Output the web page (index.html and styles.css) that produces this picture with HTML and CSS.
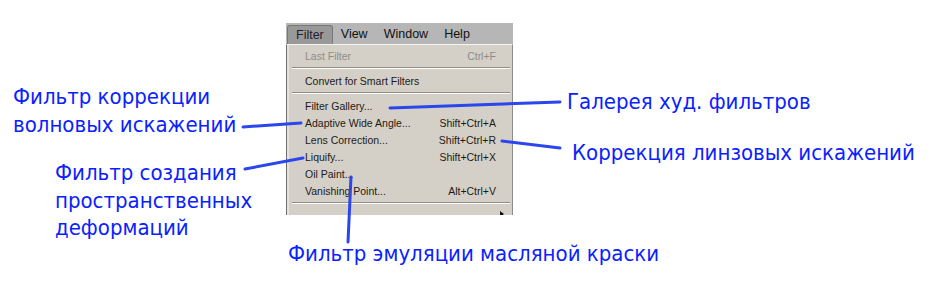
FILE: index.html
```html
<!DOCTYPE html>
<html lang="ru">

<head>
  <meta charset="UTF-8">
  <meta name="viewport" content="width=device-width, initial-scale=1.0">
  <title>Filter menu</title>
  <link rel="stylesheet" href="styles.css">
</head>

<body>
  <div class="canvas">
    <div class="menu">
      <div class="menubar">
        <span class="bar-item active">Filter</span>
        <span class="bar-item">View</span>
        <span class="bar-item">Window</span>
        <span class="bar-item">Help</span>
      </div>

      <div class="dropdown">
        <div class="item disabled"><span>Last Filter</span><span class="key">Ctrl+F</span></div>
        <div class="sep"></div>
        <div class="item"><span>Convert for Smart Filters</span></div>
        <div class="sep sep-wide"></div>
        <div class="item"><span>Filter Gallery...</span></div>
        <div class="item"><span>Adaptive Wide Angle...</span><span class="key">Shift+Ctrl+A</span></div>
        <div class="item"><span>Lens Correction...</span><span class="key">Shift+Ctrl+R</span></div>
        <div class="item"><span>Liquify...</span><span class="key">Shift+Ctrl+X</span></div>
        <div class="item"><span>Oil Paint...</span></div>
        <div class="item"><span>Vanishing Point...</span><span class="key">Alt+Ctrl+V</span></div>
        <div class="sep sep-wide"></div>
        <div class="item submenu"><span class="arrow"></span></div>
      </div>
    </div>

    <!-- callout labels -->
    <div class="note note-wave">Фильтр коррекции<br>волновых искажений</div>
    <div class="note note-liquify">Фильтр создания<br>пространственных<br>деформаций</div>
    <div class="note note-gallery">Галерея худ. фильтров</div>
    <div class="note note-lens">Коррекция линзовых искажений</div>
    <div class="note note-oil">Фильтр эмуляции масляной краски</div>

    <svg class="leaders" width="931" height="294" viewBox="0 0 931 294">
      <line x1="390" y1="108" x2="560" y2="102" />
      <line x1="243" y1="127" x2="301" y2="123" />
      <line x1="245" y1="169" x2="303" y2="158" />
      <line x1="502" y1="141" x2="560" y2="148" />
      <line x1="351" y1="177" x2="348" y2="242" />
    </svg>
  </div>
</body>

</html>
```

FILE: styles.css
```css
body {
  margin: 0;
  background-color: #fff;
}

.canvas {
  position: relative;
  width: 931px;
  height: 294px;
  overflow: hidden;
}

.menu {
  margin: 23px 0 0 286px;
  width: 227px;
  font-family: "Liberation Sans", Arial, sans-serif;
  color: #111;
}

.menubar {
  display: flex;
  align-items: flex-end;
  height: 21px;
  padding-left: 1px;
  background-color: #b6b6b6;
}

.bar-item {
  height: 19px;
  line-height: 18px;
  padding: 0 8px;
  font-size: 12.5px;
  box-sizing: border-box;
}

.bar-item.active {
  padding: 0 8px;
  background-color: #999;
  border: 1px solid #777;
  border-bottom: none;
  border-radius: 3px 3px 0 0;
  color: #241d2e;
}

.dropdown {
  height: 171px;
  padding: 3px 0 0 2px;
  background-color: #d4d0c8;
  border-top: 1px solid #f4f4f4;
  border-left: 1px solid #6f6f6f;
  border-right: 1px solid #8c8c8c;
  box-shadow: inset 2px 0 0 #e4e2dc;
  box-sizing: border-box;
  overflow: hidden;
}

.item {
  display: flex;
  justify-content: space-between;
  height: 17px;
  line-height: 17px;
  padding: 0 16px 0 16px;
  font-size: 10.5px;
  color: #1e1a14;
}

.item.disabled {
  color: #8e8c88;
}

.sep {
  margin: 2px 2px 4px 3px;
  border-top: 1px solid #8f8d88;
  border-bottom: 1px solid #fff;
}

.sep-wide {
  margin-top: 2px;
}

.submenu {
  justify-content: flex-end;
  padding-right: 8px;
}

.arrow {
  width: 0;
  height: 0;
  margin-top: 3px;
  border-top: 3px solid transparent;
  border-bottom: 3px solid transparent;
  border-left: 4px solid #111;
}

.note {
  position: absolute;
  font-family: "DejaVu Sans Condensed", "DejaVu Sans", Verdana, sans-serif;
  font-stretch: condensed;
  font-size: 22px;
  line-height: 28px;
  color: #0a22ff;
  white-space: nowrap;
}

.note-wave {
  left: 13px;
  top: 83px;
}

.note-liquify {
  left: 55px;
  top: 159px;
  line-height: 27.5px;
}

.note-gallery {
  left: 567px;
  top: 88px;
}

.note-lens {
  left: 572px;
  top: 139px;
}

.note-oil {
  left: 288px;
  top: 240px;
}

.leaders {
  position: absolute;
  left: 0;
  top: 0;
  pointer-events: none;
}

.leaders line {
  stroke: #2a46ec;
  stroke-width: 3;
  stroke-linecap: round;
}
```
